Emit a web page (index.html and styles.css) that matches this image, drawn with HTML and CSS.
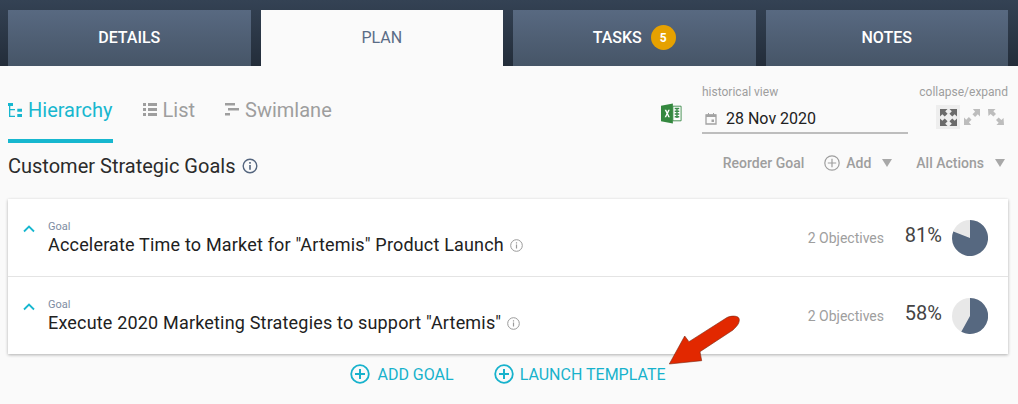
FILE: index.html
```html
<!DOCTYPE html>
<html lang="en">
<head>
    <meta charset="UTF-8">
    <link rel="stylesheet" href="styles.css">
    <title>Plan</title>
</head>
<body>
    <nav class="tabs">
        <div class="tab">DETAILS</div>
        <div class="tab active">PLAN</div>
        <div class="tab">TASKS <span class="badge">5</span></div>
        <div class="tab">NOTES</div>
    </nav>

    <section class="toolbar">
        <div class="views">
            <div class="view active">
                <svg width="16" height="14" viewBox="0 0 16 14"><path d="M0 0h5v3H0zM1 3h1.300v11H1zM2 6h5v1.300H2zM2 12.700h5V14H2zM9.300 5.700H14v3H9.300zM9.300 11H14v3H9.300z" fill="currentColor"/></svg>
                Hierarchy
            </div>
            <div class="view">
                <svg width="14" height="14" viewBox="0 0 14 14"><path d="M0 0h3v3H0zM0 5h3v3H0zM0 10h3v3H0zM5 0h9v3H5zM5 5h9v3H5zM5 10h9v3H5z" fill="currentColor"/></svg>
                List
            </div>
            <div class="view">
                <svg width="14" height="14" viewBox="0 0 14 14"><path d="M0 0h10v2.500H0zM3 5h11v2.500H3zM0 10h5v2.500H0z" fill="currentColor"/></svg>
                Swimlane
            </div>
        </div>
        <svg class="excel" width="21" height="21" viewBox="0 0 23 22">
            <path d="M13 3h9v16h-9z" fill="#fff" stroke="#3c8b4b"/>
            <path d="M15 5.500h5M15 8.500h5M15 11.500h5M15 14.500h5M17.500 5v11" stroke="#3c8b4b" stroke-width="1.500"/>
            <path d="M0 2.500 13 0v22L0 19.500z" fill="#34883f"/>
            <path d="M4 7h1.800l1 2.300L7.900 7h1.700L7.700 11l2 4H7.900l-1.100-2.500L5.700 15H4l2-4z" fill="#fff"/>
        </svg>
        <div class="history">
            <div class="small-label">historical view</div>
            <div class="date-field">
                <svg width="12" height="12" viewBox="0 0 12 12"><path d="M1 2h10v9H1z" fill="none" stroke="#a3a3a3" stroke-width="1.300"/><path d="M1 1.500h10v2.500H1zM3 0h1v2H3zM8 0h1v2H8zM6.500 6.500H9V9H6.500z" fill="#a3a3a3"/></svg>
                <span>28 Nov 2020</span>
            </div>
        </div>
        <div class="collapse">
            <div class="small-label">collapse/expand</div>
            <div class="collapse-icons">
                <span class="icon-box on">
                    <svg width="17" height="17" viewBox="0 0 18 18"><path d="M0 0h8L5.500 2.500 8 5 5 8 2.500 5.500 0 8zM18 0v8l-2.500-2.500L13 8l-3-3 2.500-2.500L10 0zM0 18v-8l2.500 2.500L5 10l3 3-2.500 2.500L8 18zM18 18h-8l2.500-2.500L10 13l3-3 2.500 2.500L18 10z" fill="#6a6a6a"/></svg>
                </span>
                <span class="icon-box">
                    <svg width="16" height="16" viewBox="0 0 18 18"><path d="M18 0v8.500l-2.500-2.500-3 3-3-3 3-3L10 0zM0 18V9.500L2.500 12l3-3 3 3-3 3L8 18z" fill="#bdbdbd"/></svg>
                </span>
                <span class="icon-box">
                    <svg width="16" height="16" viewBox="0 0 18 18"><path d="M0 0h8.500L6 2.500l3 3-3 3-3-3L.5 8z M18 18H9.500l2.500-2.500-3-3 3-3 3 3 2.500-2.500z" fill="#bdbdbd"/></svg>
                </span>
            </div>
        </div>
    </section>

    <section class="goals-head">
        <h1>Customer Strategic Goals
            <svg width="16" height="16" viewBox="0 0 16 16"><circle cx="8" cy="8" r="6.800" fill="none" stroke="#54657e" stroke-width="1.400"/><path d="M7.200 7h1.600v4.800H7.200zM7.200 4h1.600v1.700H7.200z" fill="#54657e"/></svg>
        </h1>
        <div class="actions">
            <span>Reorder Goal</span>
            <span class="action-add">
                <svg width="16" height="16" viewBox="0 0 16 16"><circle cx="8" cy="8" r="7.200" fill="none" stroke="#9e9e9e" stroke-width="1.200"/><path d="M3.800 7.400h8.400v1.200H3.800zM7.400 3.800h1.200v8.400H7.400z" fill="#9e9e9e"/></svg>
                Add <i class="caret"></i>
            </span>
            <span class="action-all">All Actions <i class="caret"></i></span>
        </div>
    </section>

    <section class="goals">
        <div class="goal">
            <svg class="chevron" width="12" height="8" viewBox="0 0 12 8"><path d="M1 6.500l5-5 5 5" fill="none" stroke="#17b7cf" stroke-width="1.800"/></svg>
            <div class="goal-text">
                <div class="goal-label">Goal</div>
                <div class="goal-name">Accelerate Time to Market for "Artemis" Product Launch
                    <svg width="13" height="13" viewBox="0 0 13 13"><circle cx="6.500" cy="6.500" r="5.800" fill="none" stroke="#9a9a9a"/><path d="M5.900 5.600h1.200v4H5.900zM5.900 3.200h1.200v1.300H5.900z" fill="#9a9a9a"/></svg>
                </div>
            </div>
            <div class="goal-count">2 Objectives</div>
            <div class="goal-pct">81%</div>
            <svg class="pie" width="36" height="36" viewBox="0 0 36 36"><circle cx="18" cy="18" r="18" fill="#e8e8e8"/><path d="M18 18V0A18 18 0 1 1 1.300 11.400z" fill="#566880"/></svg>
        </div>
        <div class="goal">
            <svg class="chevron" width="12" height="8" viewBox="0 0 12 8"><path d="M1 6.500l5-5 5 5" fill="none" stroke="#17b7cf" stroke-width="1.800"/></svg>
            <div class="goal-text">
                <div class="goal-label">Goal</div>
                <div class="goal-name">Execute 2020 Marketing Strategies to support "Artemis"
                    <svg width="13" height="13" viewBox="0 0 13 13"><circle cx="6.500" cy="6.500" r="5.800" fill="none" stroke="#9a9a9a"/><path d="M5.900 5.600h1.200v4H5.900zM5.900 3.200h1.200v1.300H5.900z" fill="#9a9a9a"/></svg>
                </div>
            </div>
            <div class="goal-count">2 Objectives</div>
            <div class="goal-pct">58%</div>
            <svg class="pie" width="36" height="36" viewBox="0 0 36 36"><circle cx="18" cy="18" r="18" fill="#e8e8e8"/><path d="M18 18V0A18 18 0 1 1 9.300 33.700z" fill="#566880"/></svg>
        </div>
    </section>

    <section class="add-links">
        <a class="add-link first">
            <svg width="20" height="20" viewBox="0 0 20 20"><circle cx="10" cy="10" r="8.800" fill="none" stroke="#17b2cc" stroke-width="1.800"/><path d="M5 9h10v2H5zM9 5h2v10H9z" fill="#17b2cc"/></svg>
            ADD GOAL
        </a>
        <a class="add-link">
            <svg width="20" height="20" viewBox="0 0 20 20"><circle cx="10" cy="10" r="8.800" fill="none" stroke="#17b2cc" stroke-width="1.800"/><path d="M5 9h10v2H5zM9 5h2v10H9z" fill="#17b2cc"/></svg>
            LAUNCH TEMPLATE
        </a>
    </section>

    <svg class="arrow" width="72" height="54" viewBox="0 0 72 54">
        <path d="M.3 49 15.700 21 20 26.700 58 2.500C63 .3 70 .5 70.300 4.500 70.500 9 67 12 64 15L31 36.700 32.700 45.700z" fill="#e22800" stroke="#7a2a14" stroke-width=".6"/>
    </svg>
</body>
</html>
```

FILE: styles.css
```css
* {
    box-sizing: border-box;
}

html, body {
    margin: 0;
    padding: 0;
}

body {
    position: relative;
    width: 1018px;
    height: 404px;
    overflow: hidden;

    background-color: #fafafa;

    font-family: "Roboto", "Liberation Sans", sans-serif;
    color: #212121;
}

/*

    TABS

*/

.tabs {
    display: flex;
    gap: 10px;

    height: 66px;
    padding: 10px 10px 0 8px;

    background-image: linear-gradient(180deg, #344254 0%, #232d3a 100%);
}

.tab {
    flex: 1;

    display: flex;
    justify-content: center;
    align-items: center;
    gap: 9px;

    padding-bottom: 1px;

    font-size: 16px;
    font-weight: 500;
    color: #fff;

    background-image: linear-gradient(180deg, #586981 0%, #465567 100%);
}

.tab.active {
    font-weight: 400;
    color: #5a6c86;

    background-image: none;
    background-color: #fafafa;
}

.badge {
    display: flex;
    justify-content: center;
    align-items: center;

    width: 25px;
    height: 25px;

    border-radius: 50%;

    background-color: #e6a100;

    font-size: 12px;
    font-weight: 700;
}

/*

    TOOLBAR

*/

.toolbar {
    display: flex;
    align-items: flex-start;

    height: 77px;
    padding: 0 10px 0 8px;
}

.views {
    display: flex;
    gap: 30px;

    flex: 1;
}

.view {
    display: flex;
    align-items: center;
    gap: 6px;

    height: 77px;
    padding-top: 15px;

    border-bottom: 4px solid transparent;

    font-size: 20px;
    color: #9e9e9e;
}

.view.active {
    gap: 4px;

    color: #17b7cf;

    border-bottom-color: #17b7cf;
}

.excel {
    margin: 37px 20px 0 0;
}

.history {
    width: 206px;
    margin: 19px 11px 0 0;
}

.small-label {
    font-size: 12px;
    line-height: 14px;
    color: #9e9e9e;
}

.date-field {
    display: flex;
    align-items: center;
    gap: 9px;

    height: 35px;
    padding: 6px 0 0 3px;

    border-bottom: 2px solid #bdbdbd;

    font-size: 16px;
    color: #212121;
}

.collapse {
    width: 89px;
    margin-top: 19px;
}

.collapse .small-label {
    text-align: right;
}

.collapse-icons {
    display: flex;

    margin-top: 6px;
    padding-left: 17px;
}

.icon-box {
    display: flex;
    justify-content: center;
    align-items: center;

    width: 24px;
    height: 24px;
}

.icon-box.on {
    background-color: #eeeeee;
}

/*

    GOALS

*/

.goals-head {
    display: flex;
    justify-content: space-between;
    align-items: center;

    height: 56px;
    padding: 0 13px 0 8px;
}

.goals-head h1 {
    display: flex;
    align-items: center;
    gap: 7px;

    margin: 0 0 10px;

    font-size: 20px;
    font-weight: 400;
    color: #2b2b2b;
}

.actions {
    display: flex;
    align-items: center;

    margin-bottom: 16px;

    font-size: 14px;
    font-weight: 500;
    color: #9e9e9e;
}

.action-add {
    display: flex;
    align-items: center;
    gap: 6px;

    margin-left: 20px;
}

.action-all {
    display: flex;
    align-items: center;
    gap: 6px;

    margin-left: 24px;
}

.caret {
    width: 0;
    height: 0;
    margin-left: 5px;

    border-left: 5px solid transparent;
    border-right: 5px solid transparent;
    border-top: 8px solid #a8a8a8;
}

.goals {
    margin: 0 10px 0 8px;

    background-color: #fff;

    box-shadow: 0 1px 3px rgba(0, 0, 0, 0.3);
}

.goal {
    display: flex;
    align-items: center;

    height: 77px;
    padding: 0 20px 0 15px;
}

.goal + .goal {
    height: 78px;

    border-top: 1px solid #e4e4e4;
}

.chevron {
    align-self: flex-start;

    margin: 26px 13px 0 0;
}

.goal-text {
    flex: 1;
    padding-top: 2px;
}

.goal-label {
    font-size: 11px;
    line-height: 13px;
    color: #7e8da2;
}

.goal-name {
    display: flex;
    align-items: center;
    gap: 6px;

    font-size: 18px;
    line-height: 24px;
    letter-spacing: 0.18px;
    color: #212121;
}

.goal-count {
    font-size: 14px;
    color: #9e9e9e;
}

.goal-pct {
    width: 58px;
    margin-bottom: 6px;

    text-align: right;

    font-size: 20px;
    color: #444;
}

.pie {
    margin-left: 10px;
}

.add-links {
    display: flex;
    justify-content: center;
    gap: 40px;

    padding-top: 10px;
    padding-right: 2px;
}

.add-link {
    display: flex;
    align-items: center;
    gap: 6px;

    font-size: 16px;
    color: #17b2cc;
}

.add-link.first {
    gap: 7px;
}

/* annotation drawn over the screenshot */
.arrow {
    position: absolute;
    left: 669px;
    top: 315px;
}
```
